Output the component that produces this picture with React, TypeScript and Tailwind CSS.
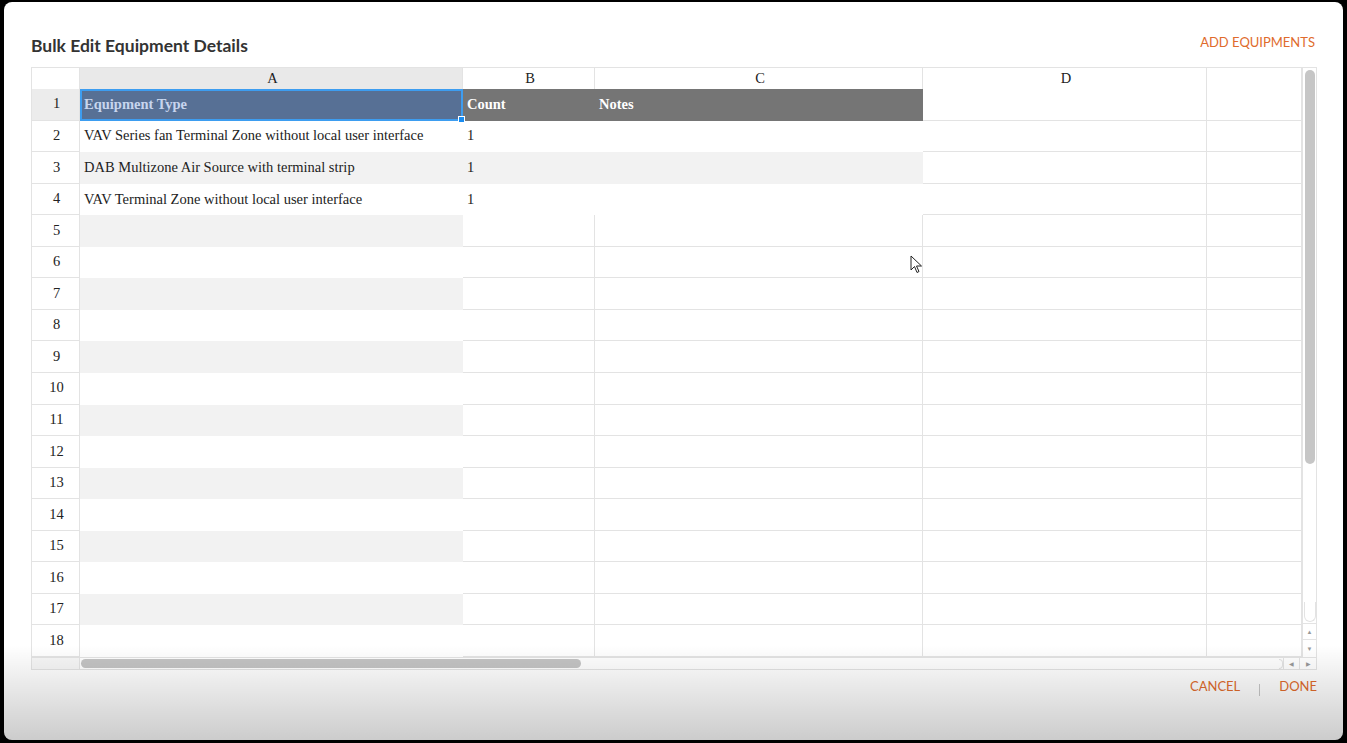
import React from "react";

const cols = ["A", "B", "C", "D", ""];
const items = [
  { type: "VAV Series fan Terminal Zone without local user interface", count: "1" },
  { type: "DAB Multizone Air Source with terminal strip", count: "1" },
  { type: "VAV Terminal Zone without local user interface", count: "1" },
];

const gridCols = "grid grid-cols-[48px_383px_132px_328px_284px_1fr]";
const cell = "border-r border-b border-[#e3e3e3]";
const serif = "font-['Liberation_Serif',serif] text-[14.5px] text-[#222]";

function RowNum({ n, active }: { n: number; active?: boolean }) {
  return (
    <div className={`${cell} flex items-center justify-center pl-[2px] ${active ? "bg-[#ececec]" : "bg-white"}`}>{n}</div>
  );
}

function HeaderRow() {
  return (
    <div className={`${gridCols} h-[21px] ${serif}`}>
      <div className={`${cell} bg-white`} />
      {cols.map((c, i) => (
        <div key={i} className={`${cell} flex items-center justify-center pl-[3px] ${i === 0 ? "bg-[#e9e9e9]" : "bg-white"}`}>
          {c}
        </div>
      ))}
    </div>
  );
}

function TitleRow() {
  return (
    <div className={`${gridCols} ${serif}`}>
      <RowNum n={1} active />
      <div className="relative flex items-center border-2 border-[#3d9df0] bg-[#577095] pl-[2px] font-bold text-[#c7d5ee]">
        Equipment Type
        <span className="absolute -bottom-[4px] -right-[4px] h-[7px] w-[7px] border border-white bg-[#1a8cf0]" />
      </div>
      <div className="flex items-center bg-[#757575] pl-[4px] font-bold text-white">Count</div>
      <div className="flex items-center border-r border-[#757575] bg-[#757575] pl-[4px] font-bold text-white">Notes</div>
      <div className={`${cell} bg-white`} />
      <div className={`${cell} bg-white`} />
    </div>
  );
}

function ItemRow({ n, type, count }: { n: number; type: string; count: string }) {
  const bg = n % 2 === 1 ? "bg-[#f2f2f2]" : "bg-white";
  return (
    <div className={`${gridCols} ${serif}`}>
      <RowNum n={n} />
      <div className={`flex items-center pl-[4px] ${bg}`}>{type}</div>
      <div className={`flex items-center pl-[4px] ${bg}`}>{count}</div>
      <div className={bg} />
      <div className={`${cell} bg-white`} />
      <div className={`${cell} bg-white`} />
    </div>
  );
}

function EmptyRow({ n }: { n: number }) {
  return (
    <div className={`${gridCols} ${serif}`}>
      <RowNum n={n} />
      <div className={n % 2 === 1 ? "bg-[#f2f2f2]" : "bg-white"} />
      <div className={`${cell} bg-white`} />
      <div className={`${cell} bg-white`} />
      <div className={`${cell} bg-white`} />
      <div className={`${cell} bg-white`} />
    </div>
  );
}

function VScroll() {
  return (
    <div className="flex w-[14px] flex-col border-l border-[#e3e3e3] bg-white">
      <div className="mx-auto mt-[2px] h-[394px] w-[10px] rounded-full bg-[#c6c6c6]" />
      <div className="mx-auto mt-auto mb-[1px] h-[20px] w-[12px] rounded-b-md border border-t-0 border-[#e3e3e3]" />
      <div className="flex h-[17px] items-center justify-center border-y border-[#e3e3e3] text-[6px] text-[#999]">▲</div>
      <div className="flex h-[17px] items-center justify-center text-[6px] text-[#999]">▼</div>
    </div>
  );
}

function HScroll() {
  return (
    <div className="flex h-[12px] border-t border-[#e3e3e3]">
      <div className="w-[48px] border-r border-[#e3e3e3] bg-[#f7f7f7]" />
      <div className="flex flex-1 items-center pl-[1px]">
        <div className="h-[9px] w-[500px] rounded-full bg-[#c4c4c4]" />
        <div className="ml-auto h-[10px] w-[4px] rounded-r-md border border-l-0 border-[#e3e3e3]" />
      </div>
      <div className="flex w-[16px] items-center justify-center border-l border-[#e3e3e3] text-[6px] text-[#999]">◀</div>
      <div className="flex w-[17px] items-center justify-center border-l border-[#e3e3e3] text-[6px] text-[#999]">▶</div>
    </div>
  );
}

export default function App() {
  return (
    <div className="h-[743px] w-[1347px] bg-black pt-[2px] pr-[4px] pb-[3px] pl-[4px]">
      <div className="relative flex h-full flex-col overflow-hidden rounded-lg bg-white font-['Lato',sans-serif]">
        <div className="flex h-[56px] items-start justify-between pr-[28px] pl-[27px] pt-[32px]">
          <h1 className="text-[17.5px] font-bold leading-[24px] text-[#333]">Bulk Edit Equipment Details</h1>
          <button className="-mt-[1px] text-[13px] text-[#e06b2c]">ADD EQUIPMENTS</button>
        </div>

        <div className="mt-[9px] mr-[26px] ml-[27px] flex flex-col border border-[#e3e3e3]">
          <div className="flex">
            <div className="flex flex-1 flex-col">
              <HeaderRow />
              <div className="grid h-[568px] grid-rows-[repeat(18,1fr)]">
                <TitleRow />
                {items.map((it, i) => (
                  <ItemRow key={i} n={i + 2} type={it.type} count={it.count} />
                ))}
                {Array.from({ length: 14 }, (_, i) => (
                  <EmptyRow key={i} n={i + 5} />
                ))}
              </div>
            </div>
            <VScroll />
          </div>
          <HScroll />
        </div>

        <div className="flex items-center justify-end gap-[19px] pt-[7px] pr-[26px] text-[13px] text-[#e06b2c]">
          <button>CANCEL</button>
          <span className="mt-[6px] h-[12px] w-px bg-[#c8c8c8]" />
          <button>DONE</button>
        </div>

        {/* bottom shade of the dialog */}
        <div className="pointer-events-none absolute inset-x-0 bottom-0 h-[95px] bg-gradient-to-b from-transparent to-black/20" />

        {/* mouse pointer */}
        <svg className="absolute top-[253px] left-[906px]" width="13" height="19" viewBox="0 0 13 19">
          <path d="M1 1 L1 15 L4.5 11.5 L7 17.5 L9 16.5 L6.5 11 L11.5 11 Z" fill="white" stroke="#222" strokeWidth="1" strokeLinejoin="round" />
        </svg>
      </div>
    </div>
  );
}
